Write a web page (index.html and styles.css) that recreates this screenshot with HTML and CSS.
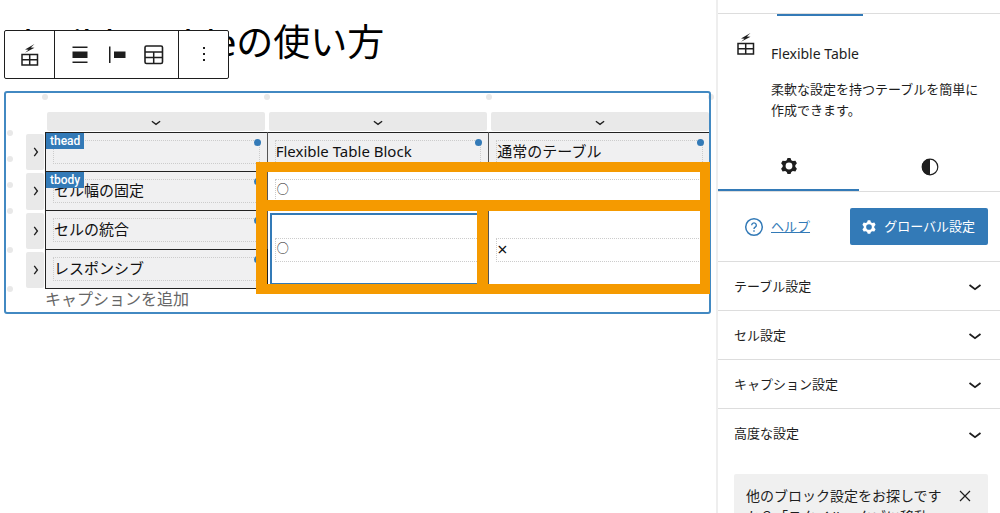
FILE: index.html
```html
<!DOCTYPE html>
<html lang="ja">
<head>
<meta charset="utf-8">
<title>Flexible Tableの使い方</title>
<link rel="stylesheet" href="styles.css">
</head>
<body>
<svg class="sprite" aria-hidden="true">
  <symbol id="down" viewBox="0 0 24 24"><path d="m6.500 11 5.500 4.200 5.500-4.200" fill="none" stroke="currentColor" stroke-width="1.800"/></symbol>
  <symbol id="flex" viewBox="0 0 24 24"><path d="M4 11.500h15.500V22H4zM11.700 11.500V22M4 16.700h15.500" fill="none" stroke="currentColor" stroke-width="1.500"/><path d="M16.500 1 7 6.500l3.500.3L7 9.700l9.500-5-3.700-.3z"/></symbol>
  <symbol id="gear" viewBox="0 0 24 24"><path fill-rule="evenodd" d="M10.500 4h3l.8 2.200 1.500.9 2.600-.4 1.500 2.600-1.600 2v1.500l1.600 2-1.500 2.600-2.600-.4-1.500.9-.8 2.200h-3l-.8-2.200-1.500-.9-2.600.4-1.500-2.600 1.600-2v-1.500l-1.600-2 1.500-2.600 2.600.4 1.500-.9zM12 8.600a3.400 3.400 0 1 0 0 6.800 3.400 3.400 0 0 0 0-6.800z"/></symbol>
</svg>
<main class="editor">
  <h1 class="title">Flexible Tableの使い方</h1>
  <div class="toolbar" role="toolbar" aria-label="ブロックツール">
    <div class="group"><button class="tool" aria-label="Flexible Table"><svg class="icon"><use href="#flex"/></svg></button></div>
    <div class="group">
      <button class="tool" aria-label="配置"><svg class="icon" viewBox="0 0 24 24"><path d="M4.500 3.500h15V5h-15zM4.500 8.500h15v6.500h-15zM4.500 18.500h15V20h-15z"/></svg></button>
      <button class="tool" aria-label="項目の揃え位置"><svg class="icon" viewBox="0 0 24 24"><path d="M4 3.500h1.500v16.500H4zM9 8.500h11.500V15H9z"/></svg></button>
      <button class="tool" aria-label="テーブルを編集"><svg class="icon" viewBox="0 0 24 24"><rect x="3" y="3" width="17.500" height="17.500" rx="1.500" fill="none" stroke="currentColor" stroke-width="1.600"/><path d="M3 9h17.500M3 14.500h17.500M11.700 9v11.500" fill="none" stroke="currentColor" stroke-width="1.500"/></svg></button>
    </div>
    <div class="group"><button class="tool" aria-label="オプション"><svg class="icon" viewBox="0 0 24 24"><path d="M11 4h2v2h-2zM11 10h2v2h-2zM11 16h2v2h-2z"/></svg></button></div>
  </div>
  <figure class="block">
    <div class="rail-top"><i class="pip"></i><i class="pip"></i><i class="pip"></i><i class="pip"></i></div>
    <div class="rail-left"><i class="pip"></i><i class="pip"></i><i class="pip"></i><i class="pip"></i><i class="pip"></i><i class="pip"></i></div>
    <div class="columns">
      <button class="select" aria-label="列 1"><svg class="arrow"><use href="#down"/></svg></button>
      <button class="select" aria-label="列 2"><svg class="arrow"><use href="#down"/></svg></button>
      <button class="select" aria-label="列 3"><svg class="arrow"><use href="#down"/></svg></button>
    </div>
    <div class="rows">
      <button class="select" aria-label="行 1"><svg class="arrow side"><use href="#down"/></svg></button>
      <button class="select" aria-label="行 2"><svg class="arrow side"><use href="#down"/></svg></button>
      <button class="select" aria-label="行 3"><svg class="arrow side"><use href="#down"/></svg></button>
      <button class="select" aria-label="行 4"><svg class="arrow side"><use href="#down"/></svg></button>
    </div>
    <div class="grid">
      <table class="table">
        <thead>
          <tr><th><span class="section">thead</span><div class="cell">&nbsp;</div><i class="handle"></i></th><th><div class="cell">Flexible Table Block</div><i class="handle"></i></th><th><div class="cell">通常のテーブル</div><i class="handle"></i></th></tr>
        </thead>
        <tbody>
          <tr><th><span class="section">tbody</span><div class="cell">セル幅の固定</div><i class="handle"></i></th><td colspan="2"><div class="cell circle">○</div></td></tr>
          <tr><th><div class="cell">セルの統合</div><i class="handle"></i></th><td class="selected" rowspan="2"><div class="cell circle">○</div></td><td rowspan="2"><div class="cell cross">×</div></td></tr>
          <tr><th><div class="cell">レスポンシブ</div><i class="handle"></i></th></tr>
        </tbody>
      </table>
      <div class="marker"><i class="marker-wide"></i><i></i><i></i></div>
    </div>
    <figcaption class="caption">キャプションを追加</figcaption>
  </figure>
</main>
<aside class="sidebar">
  <div class="topbar"></div>
  <section class="card">
    <svg class="icon"><use href="#flex"/></svg>
    <div><h2 class="card-title">Flexible Table</h2><p class="card-text">柔軟な設定を持つテーブルを簡単に作成できます。</p></div>
  </section>
  <div class="tabs" role="tablist">
    <button class="tab active" role="tab" aria-selected="true" aria-label="設定"><svg class="icon"><use href="#gear"/></svg></button>
    <button class="tab" role="tab" aria-selected="false" aria-label="スタイル"><svg class="icon" viewBox="0 0 24 24"><circle cx="12" cy="12" r="7.800" fill="none" stroke="currentColor" stroke-width="1.200"/><path d="M12 4a8 8 0 0 0 0 16z"/></svg></button>
  </div>
  <div class="actions">
    <div class="help"><svg class="help-icon" viewBox="0 0 20 20"><circle cx="10" cy="10" r="8.300" fill="none" stroke="currentColor" stroke-width="1.500"/><path d="M7.700 8.200a2.300 2.300 0 1 1 3.500 2c-.8.500-1.200.8-1.200 1.700M10 13.200v1.500" fill="none" stroke="currentColor" stroke-width="1.400"/></svg><a href="#help">ヘルプ</a></div>
    <button class="primary"><svg class="primary-icon"><use href="#gear"/></svg>グローバル設定</button>
  </div>
  <button class="panel">テーブル設定<svg class="chevron"><use href="#down"/></svg></button>
  <button class="panel">セル設定<svg class="chevron"><use href="#down"/></svg></button>
  <button class="panel">キャプション設定<svg class="chevron"><use href="#down"/></svg></button>
  <button class="panel">高度な設定<svg class="chevron"><use href="#down"/></svg></button>
  <div class="notice"><p class="notice-text">他のブロック設定をお探しですか？「スタイル」タブに移動</p><button class="close" aria-label="閉じる"><svg class="close-icon" viewBox="0 0 12 12"><path d="m1 1 10 10M11 1 1 11" stroke="currentColor" stroke-width="1.200"/></svg></button></div>
</aside>
</body>
</html>
```
FILE: styles.css
```css
* { box-sizing: border-box; }
body {
  margin: 0;
  height: 100vh;
  overflow: hidden;
  display: grid;
  grid-template-columns: minmax(0, 1fr) 284px;
  color: #1e1e1e;
  background: #fff;
  font: 13px/21px "Noto Sans", "Noto Sans CJK JP", sans-serif;
}
button { border: 0; padding: 0; margin: 0; font: inherit; color: inherit; background: none; }
h1, h2, p, figure { margin: 0; font-weight: 400; }
svg { display: block; fill: currentColor; }
.sprite { position: absolute; width: 0; height: 0; }
.icon { width: 24px; height: 24px; flex: none; }
.editor { position: relative; padding: 14px 5px 0 4px; }
.title { color: #000; font-size: 37px; line-height: 56px; margin-bottom: 21px; white-space: nowrap; }
.toolbar {
  position: absolute;
  left: 4px;
  top: 30px;
  display: flex;
  height: 49px;
  border: 1px solid #1e1e1e;
  border-radius: 2px;
  background: #fff;
}
.group { display: flex; align-items: center; padding: 0 6px; }
.group + .group { border-left: 1px solid #1e1e1e; }
.tool { width: 37px; height: 37px; display: grid; place-items: center; }
.block {
  position: relative;
  display: grid;
  grid-template-columns: 20px minmax(0, 1fr);
  padding: 21px 0 4px 21px;
}
.block::after {
  content: "";
  position: absolute;
  inset: 0;
  border: 2px solid #4289c2;
  border-radius: 3px;
  pointer-events: none;
}
.pip { display: block; width: 6px; height: 6px; border-radius: 50%; background: #e8e8e8; }
.rail-top { position: absolute; top: 3px; left: 38px; right: -3px; display: flex; justify-content: space-between; }
.rail-left { position: absolute; top: 39px; left: 3px; display: grid; grid-template-rows: 26px 26px 26px 39px 39px 6px; }
.columns { grid-column: 2; display: grid; grid-template-columns: repeat(3, 1fr); height: 20px; }
.rows { display: grid; grid-template-rows: repeat(4, 1fr); }
.select { display: grid; place-items: center; border-radius: 2px; background: #e9e9e9; }
.columns .select { margin: 0 2px 1px; }
.rows .select { margin: 2px 1px 1px; }
.arrow { width: 18px; height: 18px; }
.side { transform: rotate(-90deg); }
.grid { position: relative; }
.table { width: 100%; table-layout: fixed; border-collapse: collapse; font-size: 15px; line-height: 20px; color: #111; }
.table th, .table td { position: relative; height: 39px; padding: 7px; border: 1px solid #222; border-right-color: #555; text-align: left; font-weight: 400; }
.table th { background: #f0f0f1; }
.cell { border: 1px dotted #ccc; height: 24px; }
.circle { font-size: 12px; padding-left: 1px; }
.cross { font-size: 18px; }
.section {
  position: absolute;
  z-index: 1;
  top: 0;
  left: 0;
  padding: 0 4px;
  background: #337ab7;
  color: #fff;
  font: 500 12px/16px Roboto, sans-serif;
}
.handle { position: absolute; top: 6px; right: 6px; width: 7px; height: 7px; border-radius: 50%; background: #337ab7; }
.selected::after { content: ""; position: absolute; inset: 2px 4px 3px 2px; border: 2px solid #337ab7; }
.marker {
  position: absolute;
  z-index: 2;
  top: 30px;
  bottom: -5px;
  left: calc(100% / 3 - 11px);
  right: 1px;
  display: grid;
  grid-template: 28px 1fr / 17fr 18fr;
  border: solid #f59a00;
  border-width: 10px 10px 10px 11px;
}
.marker i { border-top: 11px solid #f59a00; }
.marker i + i + i { border-left: 11px solid #f59a00; }
.marker .marker-wide { grid-column: span 2; border: 0; }
.caption { grid-column: 2; color: #666; font-size: 16px; line-height: 21px; }
.sidebar { border-left: 2px solid #eee; overflow: hidden; }
.topbar { height: 14px; border-bottom: 1px solid #ddd; position: relative; }
.topbar::after { content: ""; position: absolute; left: 59px; top: 14px; width: 86px; height: 2px; background: #337ab7; }
.card { display: flex; gap: 13px; padding: 18px 12px 21px 16px; }
.card-title { font-size: 14px; line-height: 21px; margin: 11px 0 15px; }
.tabs { display: grid; grid-template-columns: 1fr 1fr; height: 50px; border-bottom: 1px solid #ddd; }
.tab { display: grid; place-items: center; }
.tab.active { border-bottom: 2px solid #337ab7; }
.actions { display: flex; align-items: center; justify-content: space-between; height: 70px; padding: 0 12px 0 26px; border-bottom: 1px solid #ddd; }
.help { display: flex; align-items: center; gap: 7px; color: #337ab7; }
.help a { color: inherit; }
.help-icon { width: 20px; height: 20px; }
.primary { display: flex; align-items: center; gap: 5px; height: 37px; padding: 0 13px 0 9px; border-radius: 2px; background: #337ab7; color: #fff; }
.primary-icon { width: 20px; height: 20px; }
.panel { display: flex; align-items: center; justify-content: space-between; width: 100%; height: 49px; padding: 0 13px 0 16px; border-bottom: 1px solid #ddd; }
.panel:last-of-type { border-bottom: 0; }
.chevron { width: 24px; height: 24px; }
.notice { display: flex; align-items: flex-start; gap: 12px; margin: 16px 12px 0 16px; padding: 11px 17px 12px 12px; border-radius: 2px; background: #f0f0f0; }
.notice-text { flex: 1; font-size: 14px; line-height: 21px; }
.close { padding: 5px 0; }
.close-icon { width: 12px; height: 12px; }
```
